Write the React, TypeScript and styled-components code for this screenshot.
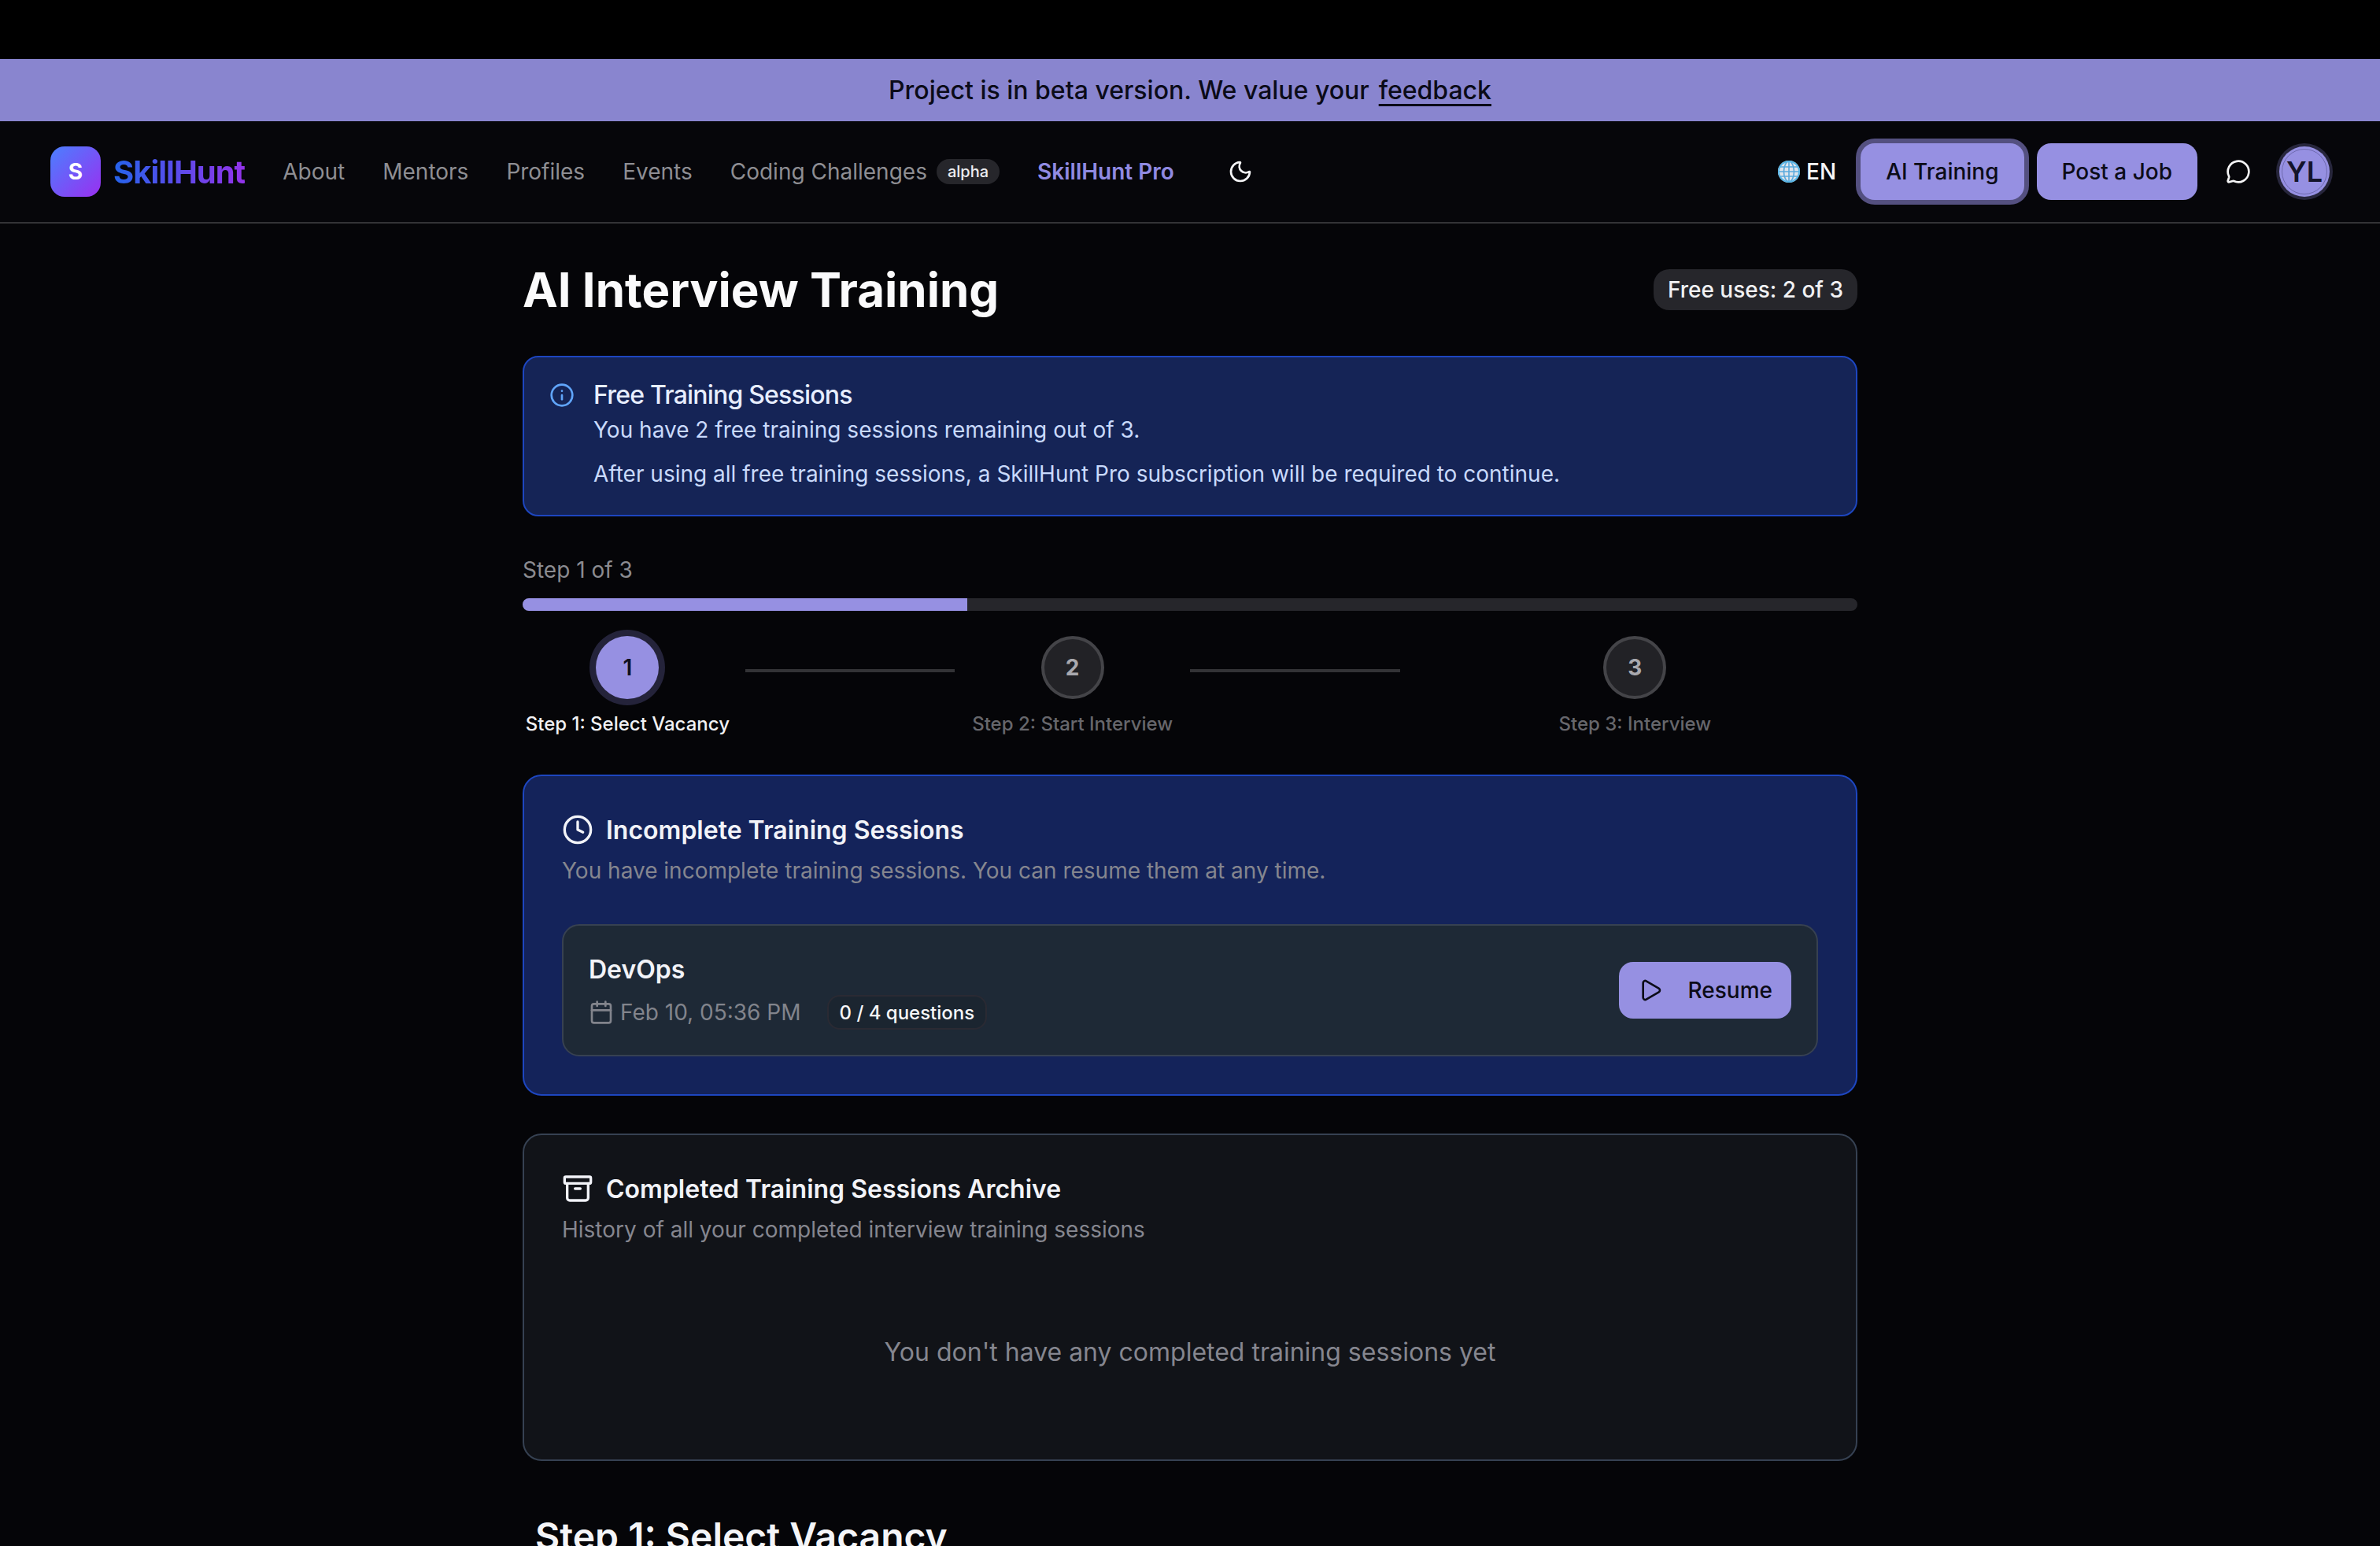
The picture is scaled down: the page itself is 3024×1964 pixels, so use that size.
import { Archive, Calendar, Clock, Info, MessageCircle, Moon, Play } from "lucide-react";
import styled, { createGlobalStyle } from "styled-components";

const GlobalStyle = createGlobalStyle`
    html, body {
        margin: 0;
        padding: 0;
        height: 100%;
        overflow: hidden;
        background: #050508;
    }
    body {
        font-family: Inter, "Noto Sans", sans-serif;
        color: #f4f4f6;
    }
    * {
        box-sizing: border-box;
    }
`;

const TopStrip = styled.div`
    height: 75px;
    background: #000;
`;

const Banner = styled.div`
    height: 79px;
    background: #8985cf;
    color: #0b0b18;
    display: flex;
    align-items: center;
    justify-content: center;
    gap: 12px;
    font-size: 32px;
    font-weight: 500;
`;

const BannerLink = styled.a`
    color: inherit;
    text-decoration: underline;
    text-underline-offset: 6px;
`;

const Nav = styled.nav`
    height: 130px;
    border-bottom: 2px solid #333336;
    background: #06060a;
    padding: 0 64px;
    display: flex;
    align-items: center;
    justify-content: space-between;
`;

const NavLeft = styled.div`
    display: flex;
    align-items: center;
    gap: 48px;
`;

const NavRight = styled.div`
    display: flex;
    align-items: center;
    gap: 16px;
`;

const Brand = styled.div`
    display: flex;
    align-items: center;
    gap: 16px;
`;

const BrandMark = styled.div`
    width: 64px;
    height: 64px;
    border-radius: 18px;
    background: linear-gradient(135deg, #4a80ff, #9a2ff0);
    color: #fff;
    display: flex;
    align-items: center;
    justify-content: center;
    font-size: 28px;
    font-weight: 700;
`;

const BrandName = styled.span`
    font-size: 40px;
    font-weight: 700;
    letter-spacing: -1px;
    background: linear-gradient(90deg, #2563eb, #9333ea);
    -webkit-background-clip: text;
    background-clip: text;
    color: transparent;
`;

const NavLink = styled.a<{ $pro?: boolean }>`
    display: flex;
    align-items: center;
    gap: 12px;
    font-size: 28px;
    font-weight: ${(p) => (p.$pro ? 600 : 400)};
    color: ${(p) => (p.$pro ? "#908ae2" : "#8e8e93")};
`;

const AlphaTag = styled.span`
    height: 32px;
    padding: 0 14px;
    border-radius: 16px;
    background: #26262b;
    color: #ededf0;
    font-size: 20px;
    font-weight: 500;
    display: flex;
    align-items: center;
`;

const IconButton = styled.span<{ $left?: number; $right?: number }>`
    display: flex;
    color: #f4f4f6;
    margin-left: ${(p) => p.$left ?? 0}px;
    margin-right: ${(p) => p.$right ?? 0}px;
`;

const Language = styled.div`
    display: flex;
    align-items: center;
    gap: 8px;
    margin-right: 15px;
    font-size: 28px;
    font-weight: 500;
    color: #f6f6f8;
`;

const NavButton = styled.button<{ $focused?: boolean }>`
    height: 72px;
    padding: 0 32px;
    border: 0;
    border-radius: 18px;
    background: #9690e2;
    color: #0c0c18;
    font-family: inherit;
    font-size: 28px;
    font-weight: 500;
    box-shadow: ${(p) => (p.$focused ? "0 0 0 6px #545080" : "none")};
`;

const Avatar = styled.div`
    width: 64px;
    height: 64px;
    border-radius: 50%;
    background: #9690e2;
    color: #14142b;
    box-shadow: 0 0 0 4px #27263c;
    position: relative;
    display: flex;
    align-items: center;
    justify-content: center;
    font-size: 36px;
    font-weight: 600;

    &::after {
        content: "";
        position: absolute;
        inset: 3px;
        border-radius: 50%;
        border: 1px solid #6f6ab0;
    }
`;

const Main = styled.main`
    width: 1696px;
    margin: 0 auto;
    padding-top: 48px;
`;

const PageHeader = styled.header`
    height: 72px;
    margin-bottom: 48px;
    display: flex;
    align-items: center;
    justify-content: space-between;
`;

const PageTitle = styled.h1`
    margin: 0;
    font-size: 60px;
    font-weight: 700;
    color: #fafafb;
`;

const UsesBadge = styled.div`
    height: 52px;
    padding: 0 18px;
    border-radius: 20px;
    background: #26262b;
    color: #f1f1f3;
    font-size: 28px;
    font-weight: 500;
    display: flex;
    align-items: center;
`;

const Notice = styled.section`
    display: flex;
    gap: 24px;
    padding: 32px;
    border: 2px solid #1d46c0;
    border-radius: 20px;
    background: #152456;
    color: #60a5fa;
`;

const NoticeBody = styled.div`
    color: #c9dafc;
    font-size: 28px;
    line-height: 40px;
`;

const NoticeTitle = styled.div`
    margin-bottom: 8px;
    color: #e7eeff;
    font-size: 32px;
    line-height: 32px;
    font-weight: 500;
    letter-spacing: -0.8px;
`;

const NoticeLine = styled.p`
    margin: 0 0 16px;

    &:last-child {
        margin-bottom: 0;
    }
`;

const StepCount = styled.div`
    margin-top: 48px;
    color: #8b8b90;
    font-size: 28px;
    line-height: 40px;
`;

const ProgressTrack = styled.div`
    height: 16px;
    margin-top: 16px;
    border-radius: 8px;
    background: #26262b;
    overflow: hidden;
`;

const ProgressFill = styled.div`
    height: 100%;
    background: #9690e2;
`;

const Stepper = styled.div`
    display: grid;
    grid-template-columns: repeat(3, 1fr);
    margin-top: 32px;
`;

const StepColumn = styled.div`
    display: flex;
    align-items: flex-start;
`;

const StepItem = styled.div`
    flex: 1;
    display: flex;
    flex-direction: column;
    align-items: center;
    gap: 16px;
`;

const StepCircle = styled.div<{ $active?: boolean }>`
    width: 80px;
    height: 80px;
    border-radius: 50%;
    border: ${(p) => (p.$active ? "0" : "4px solid #444448")};
    background: ${(p) => (p.$active ? "#9690e2" : "#222226")};
    color: ${(p) => (p.$active ? "#0f0f1c" : "#a9a9ae")};
    box-shadow: ${(p) => (p.$active ? "0 0 0 8px #24233a" : "none")};
    display: flex;
    align-items: center;
    justify-content: center;
    font-size: 28px;
    font-weight: ${(p) => (p.$active ? 600 : 700)};
`;

const StepLabel = styled.div<{ $active?: boolean }>`
    color: ${(p) => (p.$active ? "#f1f1f4" : "#67676c")};
    font-size: 24px;
    line-height: 32px;
    font-weight: 500;
    white-space: nowrap;
`;

const StepLine = styled.div`
    flex: 1;
    height: 4px;
    margin: 42px 16px 0;
    background: #333336;
`;

const Card = styled.section<{ $tone: "blue" | "dark" }>`
    margin-top: 48px;
    padding: 48px;
    border: 2px solid ${(p) => (p.$tone === "blue" ? "#1d46c0" : "#364152")};
    border-radius: 24px;
    background: ${(p) => (p.$tone === "blue" ? "#14235a" : "#111318")};
`;

const CardTitle = styled.h2`
    margin: 0;
    height: 40px;
    display: flex;
    align-items: center;
    gap: 16px;
    color: #f2f3f8;
    font-size: 32px;
    font-weight: 600;
`;

const CardText = styled.p`
    margin: 12px 0 0;
    color: #85868f;
    font-size: 28px;
    line-height: 40px;
`;

const SessionRow = styled.div`
    margin-top: 48px;
    padding: 32px;
    border: 2px solid #374151;
    border-radius: 22px;
    background: #1e2936;
    display: flex;
    align-items: center;
    justify-content: space-between;
`;

const SessionName = styled.div`
    color: #f2f3f8;
    font-size: 32px;
    line-height: 48px;
    font-weight: 600;
`;

const SessionMeta = styled.div`
    margin-top: 8px;
    display: flex;
    align-items: center;
    gap: 33px;
`;

const SessionDate = styled.div`
    display: flex;
    align-items: center;
    gap: 8px;
    color: #82848c;
    font-size: 28px;
`;

const QuestionsTag = styled.div`
    height: 44px;
    padding: 0 14px;
    border: 2px solid #2a2a33;
    border-radius: 16px;
    background: #1b2530;
    color: #f6f6f8;
    font-size: 24px;
    font-weight: 500;
    display: flex;
    align-items: center;
`;

const ResumeButton = styled.button`
    height: 72px;
    padding: 0 24px;
    border: 0;
    border-radius: 18px;
    background: #9690e2;
    color: #0c0c18;
    font-family: inherit;
    font-size: 28px;
    font-weight: 500;
    display: flex;
    align-items: center;
    gap: 32px;
`;

const EmptyState = styled.div`
    margin-top: 48px;
    padding: 64px 0;
    color: #85868f;
    font-size: 32px;
    line-height: 48px;
    text-align: center;
`;

const SectionHeading = styled.h2`
    margin: 64px 0 0;
    padding-left: 16px;
    color: #f4f5f8;
    font-size: 48px;
    line-height: 64px;
    font-weight: 600;
`;

const Globe = () => (
    <svg width="28" height="28" viewBox="0 0 28 28" fill="none">
        <circle cx="14" cy="14" r="14" fill="#dfe4ec" />
        <g stroke="#5aa9dd" strokeWidth="1.6">
            <ellipse cx="14" cy="14" rx="6.5" ry="13" />
            <path d="M14 1v26M2 8h24M1 14h26M2 20h24" />
        </g>
        <circle cx="14" cy="14" r="13" stroke="#55b4e6" strokeWidth="2" />
    </svg>
);

const steps = ["Step 1: Select Vacancy", "Step 2: Start Interview", "Step 3: Interview"];

export default function App() {
    return (
        <>
            <GlobalStyle />
            <TopStrip />
            <Banner>
                <span>Project is in beta version. We value your</span>
                <BannerLink>feedback</BannerLink>
            </Banner>
            <Nav>
                <NavLeft>
                    <Brand>
                        <BrandMark>S</BrandMark>
                        <BrandName>SkillHunt</BrandName>
                    </Brand>
                    <NavLink>About</NavLink>
                    <NavLink>Mentors</NavLink>
                    <NavLink>Profiles</NavLink>
                    <NavLink>Events</NavLink>
                    <NavLink>
                        Coding Challenges <AlphaTag>alpha</AlphaTag>
                    </NavLink>
                    <NavLink $pro>SkillHunt Pro</NavLink>
                    <IconButton $left={20}>
                        <Moon size={32} />
                    </IconButton>
                </NavLeft>
                <NavRight>
                    <Language>
                        <Globe />
                        EN
                    </Language>
                    <NavButton $focused>AI Training</NavButton>
                    <NavButton>Post a Job</NavButton>
                    <IconButton $left={20} $right={20}>
                        <MessageCircle size={32} />
                    </IconButton>
                    <Avatar>YL</Avatar>
                </NavRight>
            </Nav>
            <Main>
                <PageHeader>
                    <PageTitle>AI Interview Training</PageTitle>
                    <UsesBadge>Free uses: 2 of 3</UsesBadge>
                </PageHeader>
                <Notice>
                    <Info size={32} />
                    <NoticeBody>
                        <NoticeTitle>Free Training Sessions</NoticeTitle>
                        <NoticeLine>You have 2 free training sessions remaining out of 3.</NoticeLine>
                        <NoticeLine>
                            After using all free training sessions, a SkillHunt Pro subscription will be required to
                            continue.
                        </NoticeLine>
                    </NoticeBody>
                </Notice>
                <StepCount>Step 1 of 3</StepCount>
                <ProgressTrack>
                    <ProgressFill style={{ width: `${(1 / 3) * 100}%` }} />
                </ProgressTrack>
                <Stepper>
                    {steps.map((label, i) => (
                        <StepColumn key={label}>
                            <StepItem>
                                <StepCircle $active={i === 0}>{i + 1}</StepCircle>
                                <StepLabel $active={i === 0}>{label}</StepLabel>
                            </StepItem>
                            {i < steps.length - 1 && <StepLine />}
                        </StepColumn>
                    ))}
                </Stepper>
                <Card $tone="blue">
                    <CardTitle>
                        <Clock size={40} />
                        Incomplete Training Sessions
                    </CardTitle>
                    <CardText>You have incomplete training sessions. You can resume them at any time.</CardText>
                    <SessionRow>
                        <div>
                            <SessionName>DevOps</SessionName>
                            <SessionMeta>
                                <SessionDate>
                                    <Calendar size={32} />
                                    Feb 10, 05:36 PM
                                </SessionDate>
                                <QuestionsTag>0 / 4 questions</QuestionsTag>
                            </SessionMeta>
                        </div>
                        <ResumeButton>
                            <Play size={32} />
                            Resume
                        </ResumeButton>
                    </SessionRow>
                </Card>
                <Card $tone="dark">
                    <CardTitle>
                        <Archive size={40} />
                        Completed Training Sessions Archive
                    </CardTitle>
                    <CardText>History of all your completed interview training sessions</CardText>
                    <EmptyState>You don't have any completed training sessions yet</EmptyState>
                </Card>
                <SectionHeading>Step 1: Select Vacancy</SectionHeading>
            </Main>
        </>
    );
}
